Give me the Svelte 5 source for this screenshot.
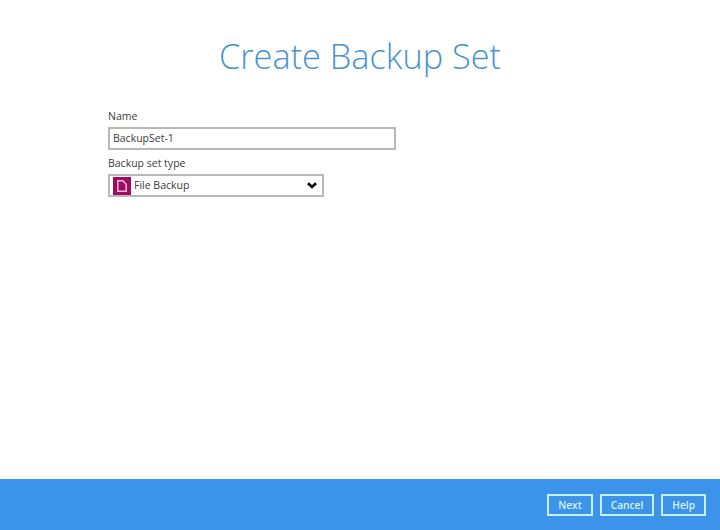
<script lang="ts">
let name = 'BackupSet-1';
const buttons = ['Next', 'Cancel', 'Help'];
</script>

<div class="page">
  <main class="content">
    <h1>Create Backup Set</h1>
    <form class="form">
      <label for="set-name">Name</label>
      <input id="set-name" class="name" type="text" bind:value={name} />
      <div class="label type-label">Backup set type</div>
      <div class="select">
        <span class="type-icon">
          <svg width="10" height="12" viewBox="0 0 10 12" fill="none" stroke="#f6b6e0" stroke-width="1.5">
            <path d="M.8.8h5l3.4 3.4v7h-8.4z" />
          </svg>
        </span>
        <span class="value">File Backup</span>
        <svg class="chevron" width="10" height="7" viewBox="0 0 10 7" fill="none" stroke="#000" stroke-width="2.6">
          <path d="M1 1.2l4 3.8 4-3.8" />
        </svg>
      </div>
    </form>
  </main>
  <footer class="footer">
    {#each buttons as b}
      <button type="button">{b}</button>
    {/each}
  </footer>
</div>

<style>
:global(body) {
  margin: 0;
  background: #fff;
}
.page {
  width: 720px;
  height: 530px;
  display: flex;
  flex-direction: column;
  font-family: "Open Sans", sans-serif;
  color: #3c3c3c;
  overflow: hidden;
}
.content {
  flex: 1;
  padding-left: 108px;
  padding-right: 108px;
}
h1 {
  margin: 32px 0 0;
  font-size: 34.3px;
  line-height: 48px;
  font-weight: 300;
  color: #4a94cf;
  text-align: center;
}
.form {
  display: flex;
  flex-direction: column;
  align-items: flex-start;
  margin-top: 29px;
}
label, .label {
  font-size: 10.5px;
  line-height: 15px;
  color: #3c3c3c;
}
.name {
  box-sizing: border-box;
  width: 288px;
  height: 23px;
  margin-top: 3px;
  padding: 0 3px 2px;
  border: 2px solid #b8b8b8;
  border-radius: 0;
  outline: none;
  font: 10.5px "Open Sans", sans-serif;
  color: #3c3c3c;
}
.type-label {
  margin-top: 6px;
}
.select {
  box-sizing: border-box;
  width: 216px;
  height: 23px;
  margin-top: 3px;
  padding: 0 5px 0 3px;
  display: flex;
  align-items: center;
  border: 2px solid #b8b8b8;
  font-size: 10.5px;
}
.type-icon {
  width: 18px;
  height: 18px;
  display: flex;
  align-items: center;
  justify-content: center;
  background: #a00b62;
}
.value {
  flex: 1;
  margin-left: 3px;
  margin-bottom: 2px;
}
.footer {
  height: 51px;
  display: flex;
  align-items: center;
  justify-content: flex-end;
  gap: 7px;
  padding-right: 14px;
  background: #3b93ea;
}
button {
  box-sizing: border-box;
  height: 22px;
  padding: 0 9px;
  background: transparent;
  border: 2px solid #c6f0fb;
  border-radius: 0;
  font: 600 10.2px "Open Sans", sans-serif;
  color: #d8f2fb;
}
</style>
